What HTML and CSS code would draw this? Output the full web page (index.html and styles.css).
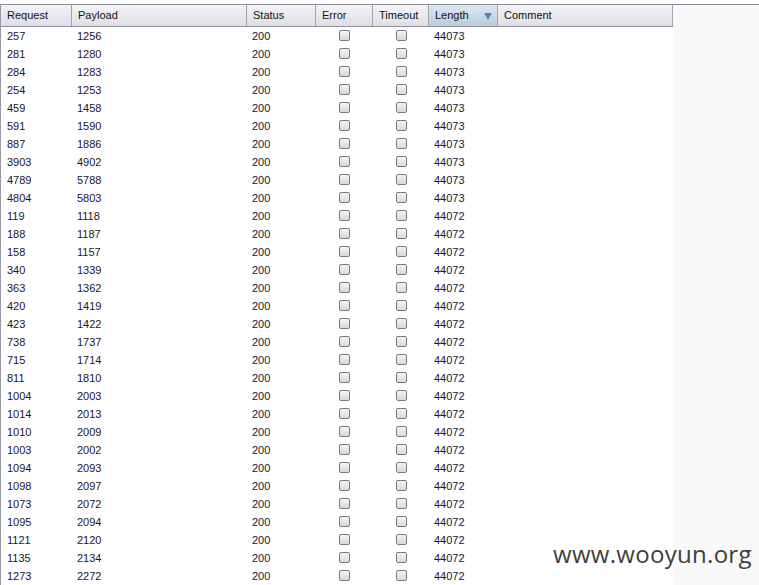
FILE: index.html
```html
<!DOCTYPE html>
<html>
<head>
<meta charset="utf-8">
<link rel="stylesheet" href="styles.css">
</head>
<body>
<div class="frame">
  <div class="results">
    <div class="head">
      <div class="hc">Request</div>
      <div class="hc">Payload</div>
      <div class="hc">Status</div>
      <div class="hc">Error</div>
      <div class="hc">Timeout</div>
      <div class="hc sorted">Length<span class="tri"></span></div>
      <div class="hc">Comment</div>
    </div>
    <div class="rows" id="rows"></div>
  </div>
  <div class="filler"></div>
</div>
<div class="wm">www.wooyun.org</div>
<script src="app.js"></script>
</body>
</html>
```

FILE: app.js
```js
const data = [
  [257,1256,44073],[281,1280,44073],[284,1283,44073],[254,1253,44073],[459,1458,44073],
  [591,1590,44073],[887,1886,44073],[3903,4902,44073],[4789,5788,44073],[4804,5803,44073],
  [119,1118,44072],[188,1187,44072],[158,1157,44072],[340,1339,44072],[363,1362,44072],
  [420,1419,44072],[423,1422,44072],[738,1737,44072],[715,1714,44072],[811,1810,44072],
  [1004,2003,44072],[1014,2013,44072],[1010,2009,44072],[1003,2002,44072],[1094,2093,44072],
  [1098,2097,44072],[1073,2072,44072],[1095,2094,44072],[1121,2120,44072],[1135,2134,44072],
  [1273,2272,44072]
];
const rows = document.getElementById('rows');
for (const [r, p, l] of data) {
  const row = document.createElement('div');
  row.className = 'row';
  row.innerHTML =
    '<div class="c">' + r + '</div>' +
    '<div class="c">' + p + '</div>' +
    '<div class="c">200</div>' +
    '<div class="c cb"><span class="box"></span></div>' +
    '<div class="c cb"><span class="box"></span></div>' +
    '<div class="c len">' + l + '</div>' +
    '<div class="c"></div>';
  rows.appendChild(row);
}
```

FILE: styles.css
```css
html, body {
  margin: 0;
  padding: 0;
  background: #fff;
}
body {
  font-family: "Liberation Sans", Arial, sans-serif;
  font-size: 11px;
  color: #22142e;
  height: 585px;
  overflow: hidden;
  position: relative;
}
.frame {
  margin-top: 4px;
  border-top: 1px solid #8d8d9c;
  border-left: 1px solid #9a9aa6;
  display: flex;
  height: 600px;
}
.results {
  width: 672px;
  flex: none;
  background: #fff;
}
.filler {
  flex: 1;
  background: #f9f9f9;
}
.head, .row {
  display: grid;
  grid-template-columns: 71px 175px 69px 57px 56px 69px 175px;
}
.head {
  height: 21px;
  border-bottom: 1px solid #8d8d9c;
}
.hc {
  background: linear-gradient(#f4f4f7, #dedfe5);
  border-right: 1px solid #a3a3b0;
  padding-left: 6px;
  line-height: 20px;
  color: #111;
  position: relative;
}
.hc.sorted {
  background: linear-gradient(#dfe8f0, #b9cbdc);
}
.tri {
  position: absolute;
  right: 5px;
  top: 8px;
  width: 0;
  height: 0;
  border-left: 4px solid transparent;
  border-right: 4px solid transparent;
  border-top: 7px solid #5d87b3;
}
.row {
  height: 18px;
}
.c {
  padding-left: 6px;
  line-height: 18px;
}
.c:nth-child(2) { padding-left: 5px; }
.c:nth-child(3) { padding-left: 5px; }
.cb {
  padding-left: 0;
  display: flex;
  align-items: center;
  justify-content: center;
}
.box {
  width: 9px;
  height: 9px;
  border: 1px solid #7a7a7a;
  border-radius: 2px;
  background: linear-gradient(#f6f6f6, #d8d8d8);
  margin-top: -1px;
}
.len { padding-left: 5px; }
.wm {
  position: absolute;
  left: 553px;
  top: 537px;
  font-family: "Open Sans", "DejaVu Sans", sans-serif;
  font-size: 24px;
  letter-spacing: 0.3px;
  color: #404040;
}
```
